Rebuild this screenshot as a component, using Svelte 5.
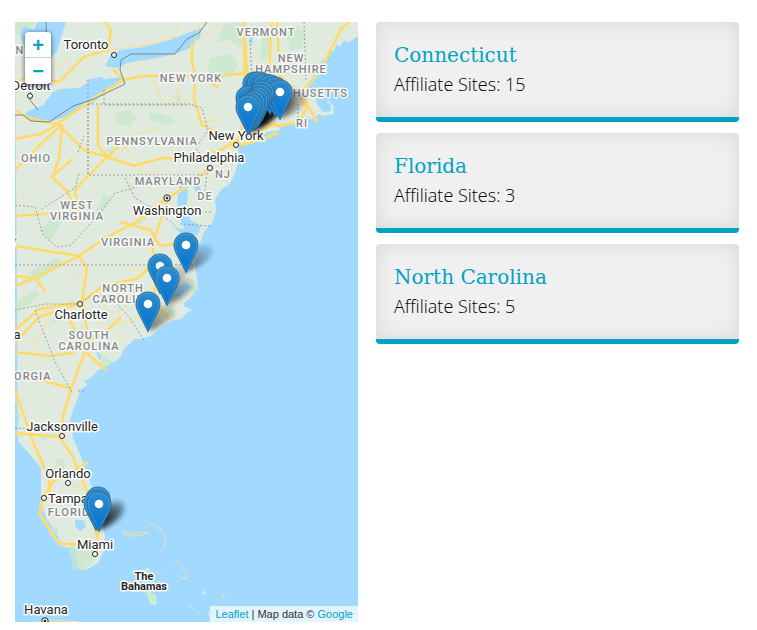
<script>
  const states = [
    { name: 'Connecticut', sites: 15 },
    { name: 'Florida', sites: 3 },
    { name: 'North Carolina', sites: 5 },
  ];

  const pins = [
    [255, 84], [259, 84], [265, 86], [270, 87], [275, 89], [280, 92],
    [248, 98], [262, 93], [260, 96], [258, 99], [256, 101], [253, 103], [250, 105], [248, 107],
    [186, 245], [160, 266], [167, 278], [148, 304],
    [98, 499], [96, 503], [99, 504],
  ];

  const regions = [
    ['VERMONT', 266, 36], ['NEW', 291, 62], ['HAMPSHIRE', 291, 73], ['NEW YORK', 191, 82],
    ['MASSACHUSETTS', 295, 97], ['RI', 302, 127], ['PENNSYLVANIA', 152, 145], ['OHIO', 36, 162],
    ['MARYLAND', 168, 185], ['NJ', 223, 178], ['DE', 205, 200], ['WEST', 77, 209],
    ['VIRGINIA', 77, 220], ['VIRGINIA', 128, 246], ['NORTH', 123, 292], ['CAROLINA', 123, 303],
    ['SOUTH', 89, 339], ['CAROLINA', 89, 350], ['GEORGIA', 25, 380], ['FLORIDA', 73, 516],
    ['N', 20, 54], ['Y', 14, 246],
  ];

  const cities = [
    ['Toronto', 86, 49], ['Detroit', 31, 90], ['New York', 236, 140], ['Philadelphia', 209, 162],
    ['Washington', 167, 215], ['Charlotte', 81, 319], ['Jacksonville', 62, 431],
    ['Orlando', 68, 478], ['Tampa', 68, 503], ['Miami', 95, 549], ['Havana', 46, 614],
    ['Atlanta', 0, 339],
  ];

  const dots = [
    [114, 55], [30, 96], [236, 145], [210, 168], [80, 304], [62, 436], [68, 483], [44, 498], [95, 554],
  ];
  const capitals = [[167, 198], [45, 621]];

  const forests = [
    'M15 22h20l-6 12-14 2z', 'M224 24l20-2 3 14-8 12-10-8-12 2z', 'M262 34l10 4-3 18-9 4z',
    'M210 58l18-4 10 8-6 14-12-2-8 8-4-14z', 'M115 114l14-4 8 8-8 8-12-2z',
    'M150 112l14 2 12 8-10 2-16-4z', 'M172 97l10-2-2 8z', 'M104 150l10-4-2 8z',
    'M104 194l8 4-14 22-6-2 8-16z', 'M40 230l16-18 8 6-14 24z', 'M30 272l26-14 6 4-18 16-26 8z',
    'M15 302l20-12 4 6-22 18z', 'M54 312l20 0-4 8-18 2z', 'M132 281l10 4-6 10-6-4z',
    'M163 314l10-4 4 8-10 2z', 'M190 284l7 2-2 8-6-4z', 'M103 355l10 6-5 6-8-4z',
    'M15 412l6 2-2 8z', 'M40 437l10-6 6 4-12 6z', 'M55 460l8-2 2 12-8 2z',
    'M69 545l26 4-2 16-6 0-3 6-11-3-3-13z', 'M50 526l8 2 0 6-6-2z',
    'M286 30l12-4 8 10-4 12-12 2z', 'M134 222l16-18 4 4-14 18z',
  ];

  const inland = [
    'M24 26l10 4 3-8h29l-4 12-5 18-10 8-12 2-8-4-7-24z',
    'M105 66l5-9 10-7 23-3 27-7 20-8 12-4-2 9-10 11-10 4-23 6-30 5-10 5z',
    'M22 116l8-6 13-5 10-13 7-3 20-1 8-6 32-5 5 4-18 9-14 13-23 12-17 6-23 0z',
    'M33 84l8-2-2 8-6 2z', 'M251 25l3 8-2 13-3-6z', 'M186 46l6-3-2 5z',
    'M180 184l7-2 1 18-3 8 6 12 10 6-3 8-8 4-10-5 4-5-4-10-3-16z',
    'M192 176l7 8 3 9-4 3-5-10z', 'M179 206l5 3-1 7-7-6z',
    'M176 250l10 16 7 2-7 6z', 'M165 290l21-7 6 4-13 9-10 2z',
    'M75 520l9 0 2 7-6 4-5-5z', 'M96 352l6 3-2 6z', 'M83 379l10 4-3 4z',
    'M182 246l12 2-1 6z', 'M246 139l14-6 20-3 14-5-2 4-16 5-18 4z',
    'M172 226l14 4 4 3-8 1z', 'M85 80l16-3 4 2-14 4z',
  ];

  const mainRoads = [
    'M15 82l20-6 24 6 25-25 24-7 3-20-6-8', 'M15 110l12 8 30 6 35-24 31-20 20-4h44l21 4 10 8',
    'M113 70l12 10', 'M15 139l26-5 17-10 26 26 20 6 30 10 28-8 40 2 33-18 42-19',
    'M98 104v42l12 13M62 124l-3 34-6 18M15 170l30-30 15-14',
    'M192 43l0 20 4 16 33-4 18-2 10 20 48-4 16-20 20-40 8-7',
    'M247 73l-3-50M268 86l4-64M300 96l-20-20-3-54M195 84l-1 15 8 26 22 11 12 12',
    'M244 22l1 96-9 28M210 168l-26 20-16 10-16 48 5 20-3 34 15 19',
    'M15 216l40-3 26 7-14-29-15-14 20-18M81 220l-6-30 22-23 24-23',
    'M167 198l-34 26-28 14-26 18-40 20-24 10', 'M79 256l8 12-5 34M120 222l30 8 10 16 20-3',
    'M15 330l24-21 42-7 22-16 36-8 20-22M81 303l-42 14-24 26M82 303l7 38-17 45-9 30-2 20',
    'M15 352l35 4 22-3 15-12 22-12 12-12', 'M69 319l19 35 18 16',
    'M15 390l12 34 6 18 15 34 3 20', 'M15 433l45 4 13 20 16 40 8 40', 'M15 372l57 17',
    'M44 498l8-16 14-6 22-14M42 500l-2 14 12 20 8 10 36 0',
    'M98 524l-1 30', 'M15 246l64 10M15 276l20 2 10 14',
    'M305 106l-8-14M303 96l14 26M245 119l35 7 20-5 7-14M240 145l20-5 18-7',
  ];

  const minorRoads = [
    'M150 75l14 30 26-6M180 78l-4 18M140 58l-6 14M115 160l20-26 24-5M15 94l32-17 25-20',
    'M123 145l20 21-12 20M152 190l-12-12 23-8M195 122l26-2M178 22l-2 14-26 8-40 6',
    'M200 22l-6 20 26-16M236 148l-14 16-12 4M230 148l10-10M207 150l22 6',
    'M105 286l10 8 28-3M100 290l8 26 20-10M116 330l8 12M128 272l26-6M88 268l-20 16',
    'M20 200l24-22M61 168l10-5M53 176l12 12M139 246l8-22M154 300l-20 20-20 4M136 280l16 18 15 18',
    'M15 400l6 12M30 355l20-40M56 303l-18 16M80 302l26 28M50 480l6-14M86 490l-20-7',
  ];

  const borders = [
    'M88 104v71H205M88 104H190l12 4 6 22-12 18 12 16M104 90v15H190M88 80v95',
    'M15 265h178M15 310l30-6h35l10-8h20l20 22 15 24M250 40l4 84M304 22l2 60M245 98h58M298 104v20',
    'M15 205l20 2 8 28 14 12 14-2 27-30 17-22 22-6M79 174l-4 14-35 22M35 310l20 52 18 32M78 391l6 0',
    'M208 165l-4 34M193 212h20M180 224l30 2M15 428l30 2M125 178l10 20 20 12 20 15M78 152l6-16',
  ];

  const ink = [
    'M15 115h8l8 6 18 1 24-16 21-7 31-15-5-14 1-10 10-6h44l12-15 12-6 8-11',
    'M46 22l1 30-16 34-1 14 8 10',
  ];

  const islands = [
    'M123 531l7 3 9-2 9 1-8 2-8 1-6 0z', 'M149 524l7 1 6 6 4 8-2 8-3 4',
    'M174 560l7 6 6 8-1 5-4-1', 'M156 573l6-1', 'M222 595l3 2-2 2z',
    'M36 622l16-2 16 1 10 1z',
  ];
</script>

<main>
  <section class="map" aria-label="Affiliate map">
    <svg class="tiles" viewBox="15 22 343 600" preserveAspectRatio="xMinYMin slice" role="img" aria-label="Map of the east coast">
      <defs>
        <linearGradient id="pin-fill" x1="0" y1="0" x2="0" y2="1">
          <stop offset="0" stop-color="#2e8ccb" />
          <stop offset="1" stop-color="#0072d0" />
        </linearGradient>
        <linearGradient id="pin-shade" x1="0" y1="1" x2="1" y2="0">
          <stop offset="0" stop-color="#000" stop-opacity="0.55" />
          <stop offset="1" stop-color="#000" stop-opacity="0.06" />
        </linearGradient>
        <filter id="soft" x="-40%" y="-40%" width="180%" height="180%">
          <feGaussianBlur stdDeviation="2" />
        </filter>
        <g id="pin">
          <path
            d="M0-12C-7-12-12-7-12 0c0 3.400 1 5.800 2.600 9L0 27.500 9.400 9C11 5.800 12 3.400 12 0 12-7 7-12 0-12z"
            fill="url(#pin-fill)" stroke="#2a6f9f" />
          <path
            d="M0-10.900C-6.400-10.900-10.900-6.400-10.900 0c0 3.200.9 5.500 2.400 8.500L0 25.200 8.500 8.500C10 5.500 10.900 3.200 10.900 0 10.900-6.400 6.400-10.900 0-10.900z"
            fill="none" stroke="#fff" stroke-opacity="0.15" />
          <circle r="4.300" fill="#fff" />
        </g>
        <path id="shade" d="M0 27C3 14 9 2 19 0c9-1 10 7 4 13C18 19 9 24 0 27z" fill="url(#pin-shade)" filter="url(#soft)" />
      </defs>

      <rect x="-2000" y="-2000" width="5000" height="5000" fill="#a2daff" />
      <path
        class="land"
        d="M15 22H358V36l-9 6-6-1-2 5-5-1-2 6-5 0-2 6-6 4-2 7-6 4-1 8-3 6 1 8 6 4 1 6 6 8 8-1 0-7-4-2 1-2 5 5 1 9-10 2-5-2-9 6-3-4-4 5-10 1-14 5 3 4-16 7-22 5-5 2-1 6 1 8-4 14-5 11-8 5-7 10 1 12-4 12-8 9-5 14-4 12 0 8 2 13 1 9-7 9-7 6 0 3 8 4-6 3-4 6-9 1-8 5-9 6-5 5-11 3-5 0-11 10-4 9-12 7-11 6-4 5-8 5 2 4-7 5-3 10-4 10-3 11 3 17 7 16 5 14 7 20 10 33 3 14-1 16-6 12-12 7-7-1-3-12-1-8-12-2-7-15-10-14-5-16 0-19 0-15-8-10-9-10-6-7z" />
      <g class="forest">{#each forests as d}<path {d} />{/each}</g>
      <g class="lake">{#each inland as d}<path {d} />{/each}</g>
      <g class="minor">{#each minorRoads as d}<path {d} />{/each}</g>
      <g class="casing">{#each mainRoads as d}<path {d} />{/each}</g>
      <g class="road">{#each mainRoads as d}<path {d} />{/each}</g>
      <g class="border">{#each borders as d}<path {d} />{/each}</g>
      <g class="ink">{#each ink as d}<path {d} />{/each}</g>
      <path d="M142 571l6-3 3 6-5 2zM147 592l8 3 1 9-5 0z" fill="#c5edcb" stroke="#e3ecdc" />
      <g class="island">{#each islands as d}<path {d} />{/each}</g>
      <path d="M203 589l2 4-3 1M189 605l5 4M208 611l3 8" fill="none" stroke="#e9f6fc" />

      <g class="dot">
        {#each dots as [x, y]}<circle cx={x} cy={y} r="2.500" />{/each}
        {#each capitals as [x, y]}<circle cx={x} cy={y} r="3.200" /><circle class="core" cx={x} cy={y} r="1" />{/each}
      </g>
      <g class="region">{#each regions as [name, x, y]}<text {x} {y}>{name}</text>{/each}</g>
      <g class="city">{#each cities as [name, x, y]}<text {x} {y}>{name}</text>{/each}</g>
      <g class="country"><text x="144" y="580">The</text><text x="144" y="590">Bahamas</text></g>

      {#each pins as [x, y]}<use href="#shade" {x} {y} />{/each}
      {#each pins as [x, y]}<use href="#pin" {x} {y} />{/each}
    </svg>

    <div class="zoom">
      <button type="button" aria-label="Zoom in">+</button>
      <button type="button" aria-label="Zoom out">−</button>
    </div>
    <div class="credit"><a href="#leaflet">Leaflet</a> | Map data © <a href="#google">Google</a></div>
  </section>

  <section class="cards" aria-label="States">
    {#each states as state}
      <article>
        <h2><a href="#state">{state.name}</a></h2>
        <p>Affiliate Sites: {state.sites}</p>
      </article>
    {/each}
  </section>
</main>

<style>
  :global(body) {
    margin: 0;
    background: #fff;
  }
  main {
    display: grid;
    grid-template-columns: 343fr 363fr;
    gap: 18px;
    padding: 22px 18px 8px 15px;
    font-family: 'Open Sans', 'Noto Sans', sans-serif;
  }
  a {
    color: #00a3c4;
    text-decoration: none;
  }
  .map {
    position: relative;
    height: 600px;
    overflow: hidden;
    background: #a2daff;
  }
  .tiles {
    display: block;
    width: 100%;
    height: 100%;
  }
  .land { fill: #e1eadf; }
  .forest { fill: #c5e8c9; opacity: 0.7; }
  .lake { fill: #a2daff; }
  .minor, .casing, .road, .border, .ink { fill: none; stroke-linejoin: round; }
  .minor { stroke: #fae08c; stroke-width: 1; }
  .casing { stroke: #f6e3a0; stroke-width: 3; }
  .road { stroke: #ffd966; stroke-width: 2; }
  .border { stroke: #9b9fa0; stroke-width: 1; stroke-dasharray: 2 2; }
  .ink { stroke: #79868e; stroke-width: 1; }
  .island { fill: none; stroke: #f0dfa6; stroke-width: 1; }
  .dot { fill: #fff; stroke: #222; stroke-width: 1; }
  .dot .core { fill: #222; }
  text {
    font-family: Roboto, 'Liberation Sans', sans-serif;
    text-anchor: middle;
    paint-order: stroke;
    stroke: #fff;
    stroke-width: 3px;
    stroke-linejoin: round;
  }
  .region text {
    font-size: 11px;
    font-weight: 500;
    letter-spacing: 1px;
    fill: #85878a;
    stroke: #f5f8f4;
  }
  .city text {
    font-size: 13px;
    fill: #262626;
  }
  .country text {
    font-size: 11px;
    font-weight: 700;
    fill: #262626;
  }
  .zoom {
    position: absolute;
    top: 10px;
    left: 10px;
    display: flex;
    flex-direction: column;
    width: 26px;
    border-radius: 4px;
    overflow: hidden;
    box-shadow: 0 1px 5px rgba(0, 0, 0, 0.65);
  }
  .zoom button {
    height: 26px;
    padding: 0;
    border: 0;
    background: #fff;
    color: #00a3c4;
    font: bold 20px/26px 'Liberation Sans', sans-serif;
  }
  .zoom button:first-child {
    border-bottom: 1px solid #ccc;
  }
  .credit {
    position: absolute;
    right: 0;
    bottom: 0;
    padding: 0 5px;
    background: rgba(255, 255, 255, 0.7);
    color: #333;
    font: 11px/16px 'Liberation Sans', Arial, sans-serif;
  }
  .cards {
    display: flex;
    flex-direction: column;
    gap: 11px;
  }
  article {
    padding: 18px 18px 19px;
    border-bottom: 5px solid #00a3c4;
    border-radius: 4px;
    background: #f0f0f0;
    box-shadow: inset 0 0 20px rgba(0, 0, 0, 0.1);
  }
  h2 {
    margin: 0;
    font: 300 20px/30px 'DejaVu Serif', serif;
  }
  p {
    margin: 0;
    color: #000;
    font-size: 18px;
    font-weight: 300;
    line-height: 28px;
  }
</style>
